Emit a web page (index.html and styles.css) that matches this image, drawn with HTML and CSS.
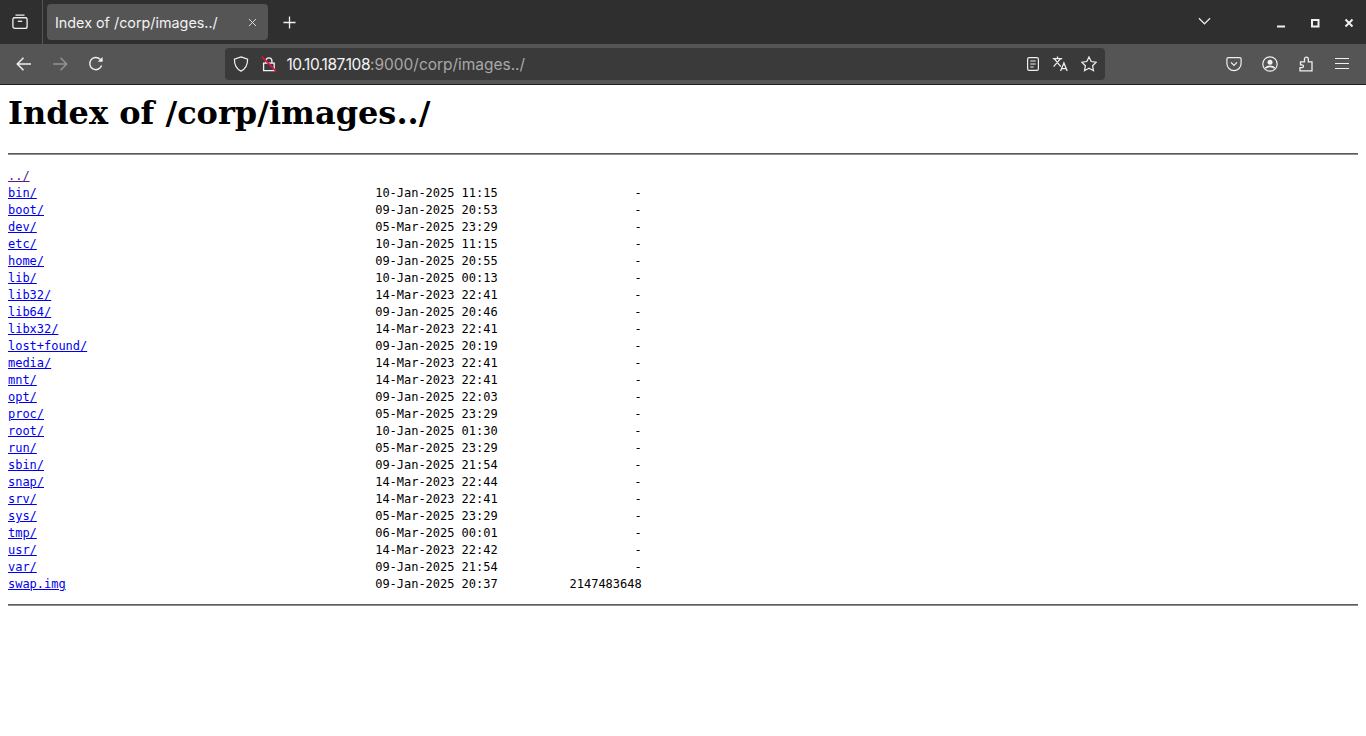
FILE: index.html
```html
<!DOCTYPE html>
<html lang="en">
<head>
<meta charset="utf-8">
<title>Index of /corp/images../</title>
<link rel="stylesheet" href="styles.css">
</head>
<body>
<header class="chrome">
  <div class="tabstrip">
    <div class="tabs-view">
      <svg class="ico" viewBox="0 0 16 16" fill="none" stroke="currentColor" stroke-width="1.3"><path d="M3.5 1.2h9M1.6 3.6h12.8"/><rect x="0.9" y="3.6" width="14.2" height="10.8" rx="2"/><path d="M5.8 7.3h4.4"/></svg>
    </div>
    <div class="tab">
      <span class="tab-title">Index of /corp/images../</span>
      <svg class="tab-close" viewBox="0 0 10 10" fill="none" stroke="currentColor" stroke-width="1"><path d="M1 1l8 8M9 1l-8 8"/></svg>
    </div>
    <svg class="newtab" viewBox="0 0 14 14" fill="none" stroke="currentColor" stroke-width="1.4"><path d="M7 .5v13M.5 7h13"/></svg>
    <div class="strip-spacer"></div>
    <svg class="listall" viewBox="0 0 14 8" fill="none" stroke="currentColor" stroke-width="1.3"><path d="M1 1l6 6 6-6"/></svg>
    <div class="winctl">
      <svg class="winbtn" viewBox="0 0 10 10" fill="none" stroke="currentColor" stroke-width="2"><path d="M1 8.5h8"/></svg>
      <svg class="winbtn" viewBox="0 0 10 10" fill="none" stroke="currentColor" stroke-width="2"><rect x="2" y="2" width="6.5" height="6.5"/></svg>
      <svg class="winbtn" viewBox="0 0 10 10" fill="none" stroke="currentColor" stroke-width="2"><path d="M1.500 1.500l7 7M8.500 1.500l-7 7"/></svg>
    </div>
  </div>
  <div class="toolbar">
    <div class="nav">
      <svg class="ico" viewBox="0 0 16 16" fill="none" stroke="currentColor" stroke-width="1.5"><path d="M15 8H1.500M7.500 1.800L1.300 8l6.200 6.200"/></svg>
      <svg class="ico dim" viewBox="0 0 16 16" fill="none" stroke="currentColor" stroke-width="1.5"><path d="M1 8h13.500M8.500 1.800L14.700 8l-6.200 6.200"/></svg>
      <svg class="ico" viewBox="0 0 16 16" fill="none" stroke="currentColor" stroke-width="1.4"><path d="M13.600 9.600A6.100 6.100 0 1 1 12.200 3.300L14 5"/><path d="M14.600.9v4.800H9.800" fill="currentColor" stroke="none"/></svg>
    </div>
    <div class="urlbar">
      <svg class="ico shield" viewBox="0 0 16 16" fill="none" stroke="currentColor" stroke-width="1.2"><path d="M8 .9l6.600 2.200c.1 5.800-1.600 9.700-6.600 12-5-2.300-6.700-6.200-6.600-12z"/></svg>
      <svg class="ico lock" viewBox="0 0 16 16" fill="none" stroke-width="1.3"><path stroke="#f4f4f4" d="M2.600 7.200h10.600v7.400H2.600zM5 7V4.400a3 3 0 0 1 5.900 0V7"/><path stroke="#e0123f" stroke-width="1.7" d="M.8 .6l14.400 14.800"/></svg>
      <span class="url"><span class="host">10.10.187.108</span>:9000/corp/images../</span>
      <div class="url-icons">
        <svg class="ico" viewBox="0 0 16 16" fill="none" stroke="currentColor" stroke-width="1.2"><rect x="2.600" y="1.600" width="10.800" height="12.800" rx="1.600"/><path d="M5.300 5h5.400M5.300 8h5.400M5.300 11h3.400"/></svg>
        <svg class="ico translate" viewBox="0 0 18 16" fill="none" stroke="currentColor" stroke-width="1.25"><path d="M.8 2.600h9.400M5.500.5v2.100M2.200 2.600l6.600 8M8.600 2.600L1.600 10.600M8.600 15l3.300-8 3.300 8M9.800 12.600h4.400"/></svg>
        <svg class="ico" viewBox="0 0 16 16" fill="none" stroke="currentColor" stroke-width="1.2"><path d="M8 .9l2.200 4.600 5 .7-3.600 3.500.9 5L8 12.300l-4.500 2.400.9-5L.8 6.200l5-.7z"/></svg>
      </div>
    </div>
    <div class="actions">
      <svg class="ico" viewBox="0 0 16 16" fill="none" stroke="currentColor" stroke-width="1.2"><path d="M2.300 1.700h11.400c.8 0 1.400.6 1.400 1.400v4.400a7.100 7.100 0 0 1-14.200 0V3.100c0-.8.6-1.400 1.400-1.400z"/><path d="M5 6.400l3 3 3-3" stroke-width="1.3"/></svg>
      <svg class="ico" viewBox="0 0 16 16" fill="none" stroke="currentColor" stroke-width="1.2"><circle cx="8" cy="8" r="7.200"/><circle cx="8" cy="6.200" r="2.500" fill="currentColor" stroke="none"/><path d="M3.300 12.200c2.500-2.500 6.900-2.500 9.400 0" stroke-width="1.8"/></svg>
      <svg class="ico" viewBox="0 0 16 16" fill="none" stroke="currentColor" stroke-width="1.3"><path d="M2 14.800h12V5.800h-3.700V3a1.900 1.900 0 0 0-3.800 0v2.800H2.500v3h1.500a1.450 1.450 0 0 1 0 2.900H2z"/></svg>
      <svg class="ico" viewBox="0 0 16 16" fill="none" stroke="currentColor" stroke-width="1.1"><path d="M1 2.500h14M1 7.500h14M1 12.500h14"/></svg>
    </div>
  </div>
</header>
<main class="page">
<h1 class="heading">Index of /corp/images../</h1>
<hr class="rule">
<pre class="listing"><a class="visited" href="#">../</a>
<a href="#">bin/</a>                                               10-Jan-2025 11:15                   -
<a href="#">boot/</a>                                              09-Jan-2025 20:53                   -
<a href="#">dev/</a>                                               05-Mar-2025 23:29                   -
<a href="#">etc/</a>                                               10-Jan-2025 11:15                   -
<a href="#">home/</a>                                              09-Jan-2025 20:55                   -
<a href="#">lib/</a>                                               10-Jan-2025 00:13                   -
<a href="#">lib32/</a>                                             14-Mar-2023 22:41                   -
<a href="#">lib64/</a>                                             09-Jan-2025 20:46                   -
<a href="#">libx32/</a>                                            14-Mar-2023 22:41                   -
<a href="#">lost+found/</a>                                        09-Jan-2025 20:19                   -
<a href="#">media/</a>                                             14-Mar-2023 22:41                   -
<a href="#">mnt/</a>                                               14-Mar-2023 22:41                   -
<a href="#">opt/</a>                                               09-Jan-2025 22:03                   -
<a href="#">proc/</a>                                              05-Mar-2025 23:29                   -
<a href="#">root/</a>                                              10-Jan-2025 01:30                   -
<a href="#">run/</a>                                               05-Mar-2025 23:29                   -
<a href="#">sbin/</a>                                              09-Jan-2025 21:54                   -
<a href="#">snap/</a>                                              14-Mar-2023 22:44                   -
<a href="#">srv/</a>                                               14-Mar-2023 22:41                   -
<a href="#">sys/</a>                                               05-Mar-2025 23:29                   -
<a href="#">tmp/</a>                                               06-Mar-2025 00:01                   -
<a href="#">usr/</a>                                               14-Mar-2023 22:42                   -
<a href="#">var/</a>                                               09-Jan-2025 21:54                   -
<a href="#">swap.img</a>                                           09-Jan-2025 20:37          2147483648
</pre>
<hr class="rule">
</main>
</body>
</html>
```
FILE: styles.css
```css
html, body { margin: 0; padding: 0; background: #fff; }
body { overflow: hidden; height: 736px; }
.chrome { display: flex; flex-direction: column; font-family: Inter, "Liberation Sans", sans-serif; color: #f0f0f0; border-bottom: 1px solid #1c1c1c; }
.tabstrip { display: flex; align-items: center; height: 44px; background: #2f2f2f; }
.tabs-view { width: 42px; height: 44px; display: flex; align-items: center; border-right: 1px solid #555; flex: none; }
.tabs-view .ico { margin-left: 12px; }
.ico { width: 16px; height: 16px; flex: none; display: block; }
.tab { margin-left: 4px; width: 221px; height: 36px; background: #555; border-radius: 4px; display: flex; align-items: center; padding: 0 11px 0 8px; box-sizing: border-box; font-size: 14.35px; }
.tab-title { flex: 1; white-space: nowrap; color: #f2f2f2; }
.tab-close { width: 9px; height: 9px; color: #e8e8e8; }
.newtab { width: 13px; height: 13px; margin-left: 15px; }
.strip-spacer { flex: 1; }
.listall { width: 13px; height: 8px; margin-top: -2px; margin-right: 65px; color: #e8e8e8; }
.winctl { display: flex; gap: 24px; margin-right: 12px; margin-top: 2px; }
.winbtn { width: 10px; height: 10px; display: block; }
.toolbar { display: flex; align-items: center; height: 40px; background: #555; }
.nav { display: flex; gap: 20px; padding-left: 16px; width: 225px; box-sizing: border-box; flex: none; }
.dim { opacity: .4; }
.urlbar { width: 880px; height: 32px; background: #3a3a3a; border-radius: 4px; display: flex; align-items: center; padding: 0 8px; box-sizing: border-box; flex: none; }
.lock { margin-left: 12px; }
.url { margin-left: 9.5px; font-size: 15.5px; letter-spacing: -.03px; color: #a8a8a8; white-space: nowrap; }
.host { color: #f4f4f4; letter-spacing: -.43px; }
.url-icons { margin-left: auto; display: flex; gap: 11px; }
.translate { width: 18px; }
.actions { display: flex; gap: 20px; margin-left: 121px; }
.page { display: block; margin: 0; padding: 0 8px; color: #000; }
.heading { font-family: "DejaVu Serif", serif; font-size: 32px; font-weight: bold; margin: 0; padding: 9px 0 0; line-height: 38px; }
.rule { margin: 21px 0 0; border: 0; border-top: 1px solid #5c5c5c; border-bottom: 1px solid #8e8e8e; height: 0; }
.listing { margin: 13px 0 11px; font-family: "DejaVu Sans Mono", monospace; font-size: 12px; letter-spacing: -.025px; line-height: 17px; }
.listing a { color: #0000ee; }
.listing a.visited { color: #551a8b; }
.page > .rule:last-child { margin-top: 0; }
```
